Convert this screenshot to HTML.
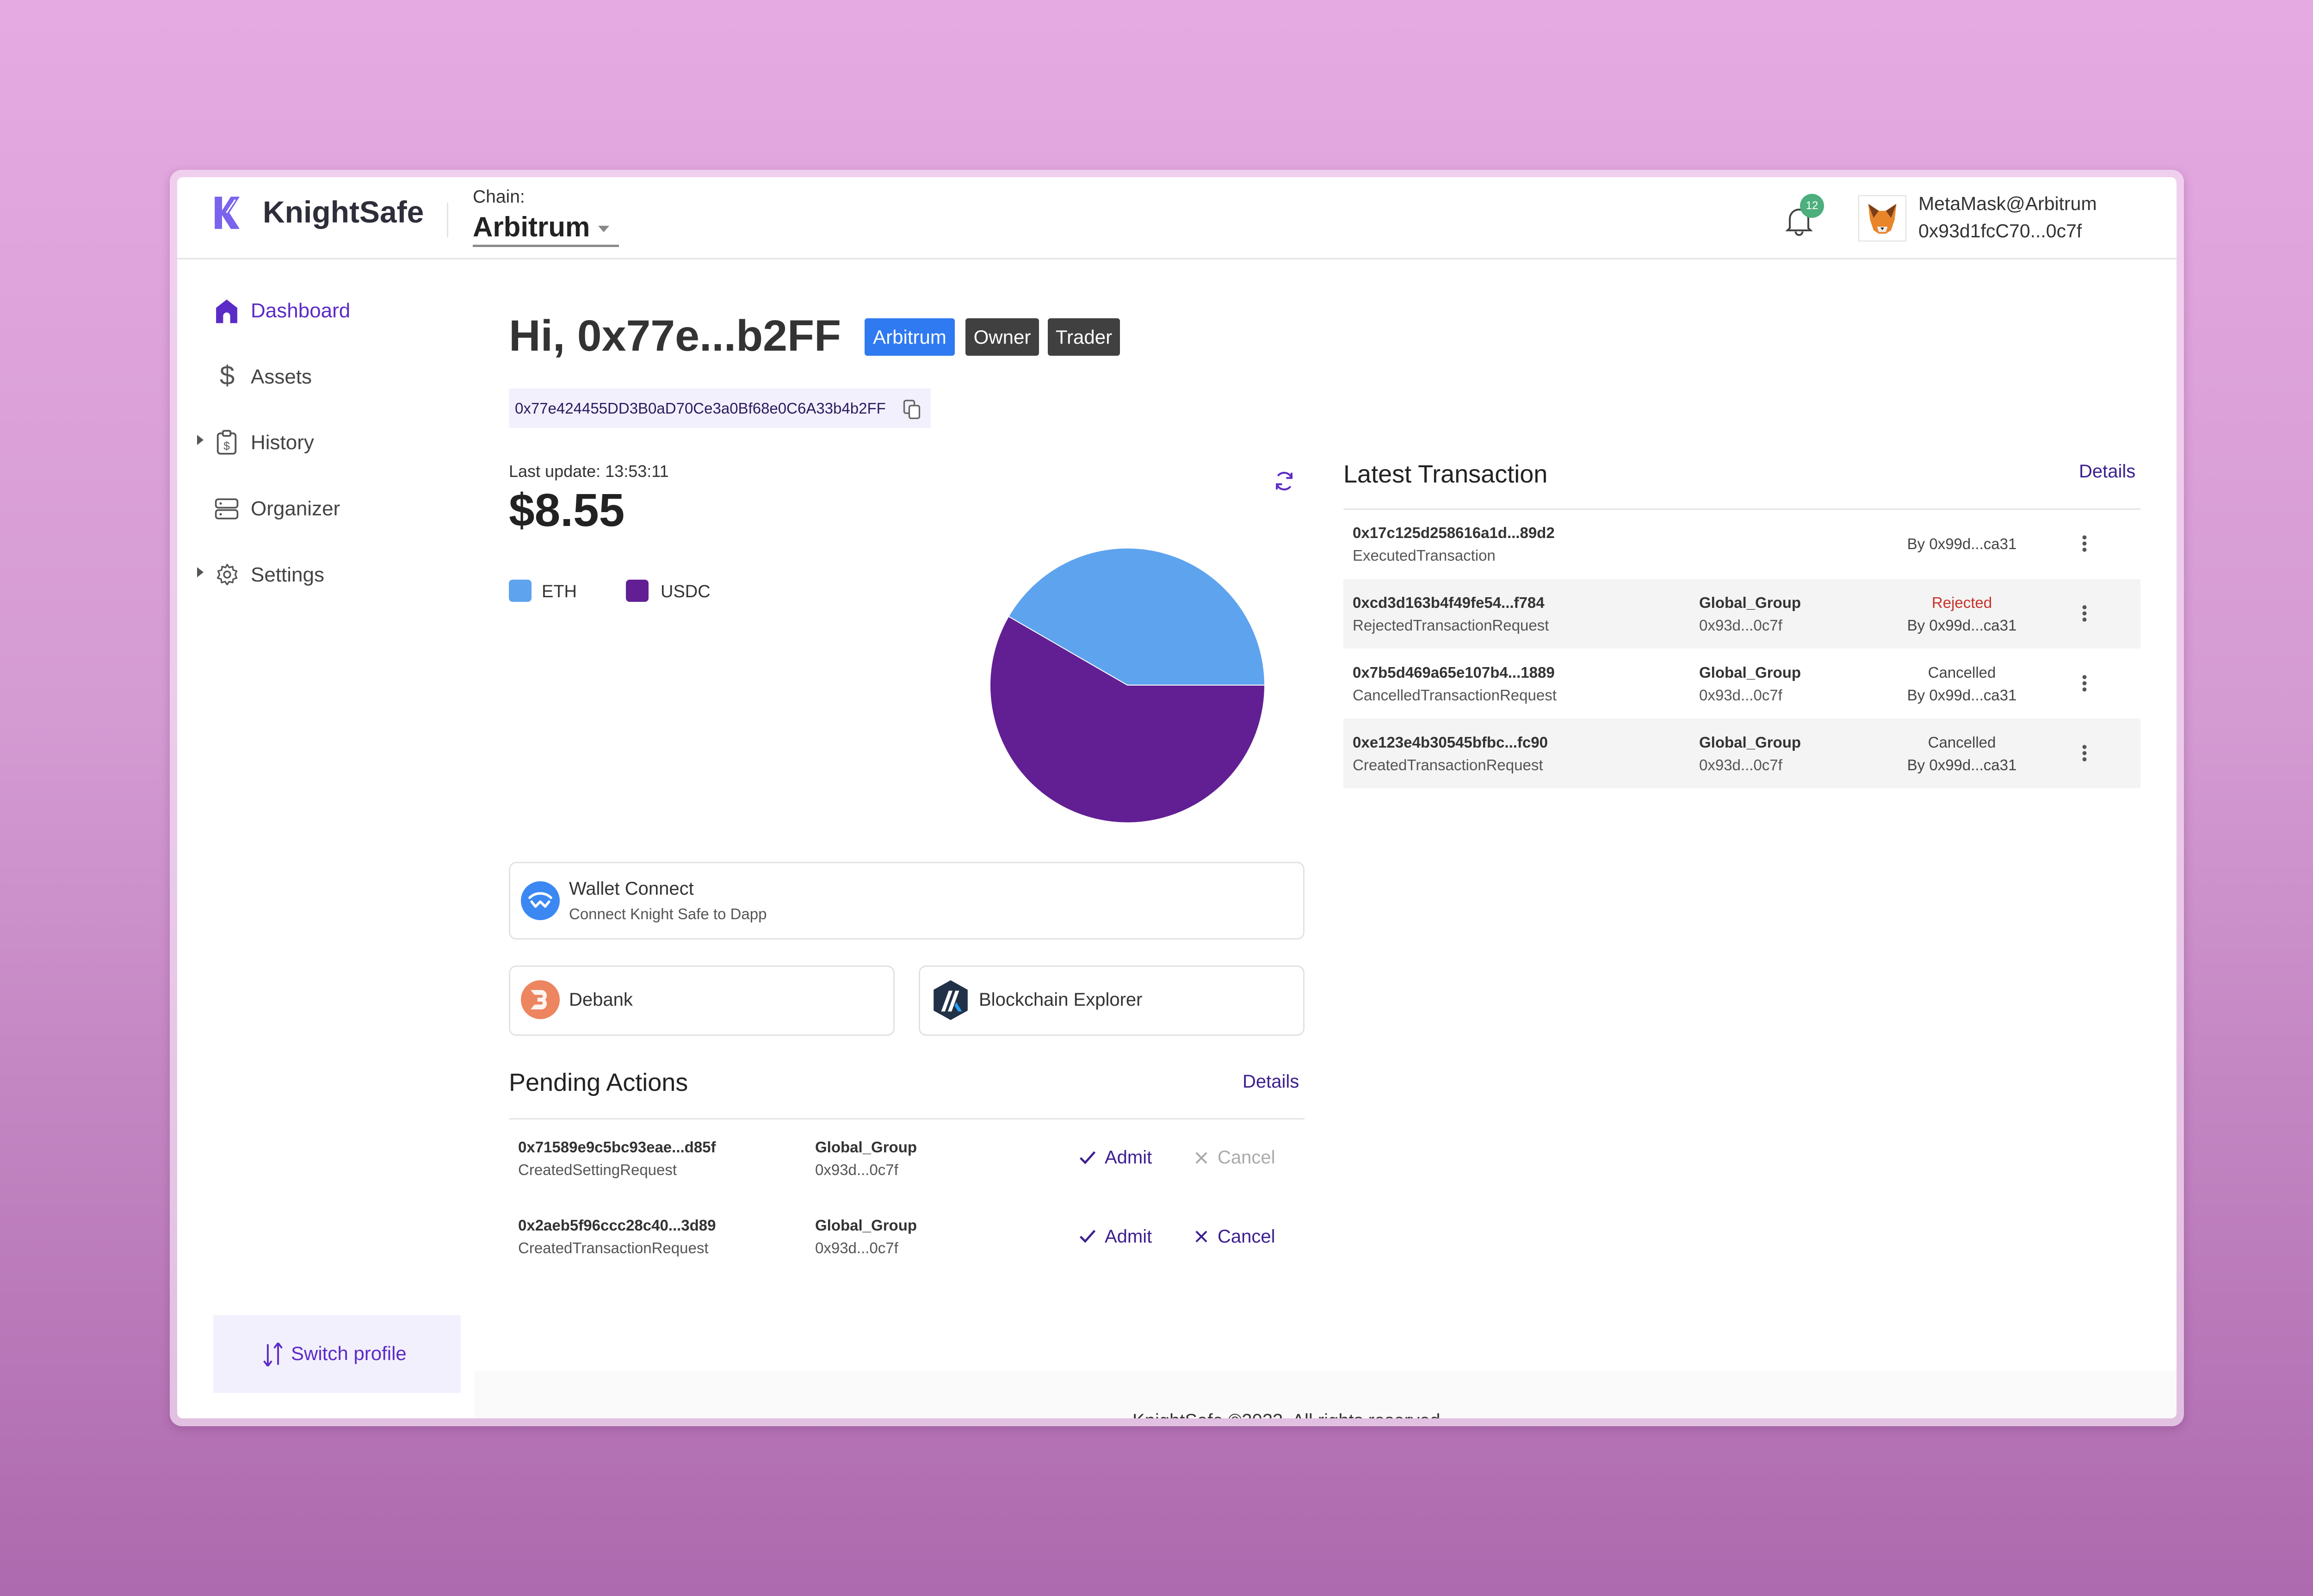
<!DOCTYPE html>
<html><head><meta charset="utf-8">
<style>
*{margin:0;padding:0;box-sizing:border-box}
html,body{width:5088px;height:3450px;overflow:hidden}
body{font-family:"Liberation Sans",sans-serif;background:linear-gradient(180deg,#e6aae2 0%,#d49ad2 45%,#ad6aae 100%);position:relative;color:#333}
.a{position:absolute;white-space:nowrap;line-height:1}
.frame{position:absolute;left:367px;top:367px;width:4354px;height:2716px;border-radius:26px;background:rgba(245,225,243,0.7);box-shadow:0 6px 20px rgba(90,30,90,0.25)}
.win{position:absolute;left:383px;top:383px;width:4322px;height:2683px;background:#fff;border-radius:12px;overflow:hidden}
.card{position:absolute;border:3px solid #e2e2e2;border-radius:16px;background:#fff}
.badge{position:absolute;top:688px;height:81px;border-radius:6px;color:#fff;font-size:42px;line-height:81px;text-align:center}
.h{font-weight:bold;color:#333;font-size:33px}
.s{color:#555;font-size:33px}
.nav{font-size:44px;color:#444}
</style></head><body>
<div class="frame"></div>
<div class="win">
  <div class="a" style="left:0;top:174px;width:4322px;height:4px;background:#e8e8e8"></div>
  <svg class="a" style="left:78px;top:39px" width="76" height="76" viewBox="0 0 24 24"><path d="M1 1h5v22H1z" fill="#7b63ee"/><path d="M12 1h6l-7 11 7 11h-6L5 12z" fill="#7b63ee"/><path d="M9 12l6-9" stroke="#fff" stroke-width="1" fill="none"/></svg>
  <div class="a" style="left:185px;top:42px;font-size:66px;font-weight:bold;color:#2e2e3a">KnightSafe</div>
  <div class="a" style="left:583px;top:55px;width:3px;height:75px;background:#e4e4e4"></div>
  <div class="a" style="left:639px;top:23px;font-size:39px;color:#333">Chain:</div>
  <div class="a" style="left:639px;top:78px;font-size:60px;font-weight:bold;color:#222">Arbitrum</div>
  <div class="a" style="left:910px;top:105px;width:0;height:0;border-left:12px solid transparent;border-right:12px solid transparent;border-top:14px solid #888"></div>
  <div class="a" style="left:639px;top:146px;width:316px;height:5px;background:#8a8a8a"></div>
  <svg class="a" style="left:3475px;top:60px" width="62" height="70" viewBox="0 0 24 28"><path d="M4 20V12a8 8 0 0 1 16 0v8l2 2H2z M9 23a3 3 0 0 0 6 0" fill="none" stroke="#444" stroke-width="1.6"/></svg>
  <div class="a" style="left:3508px;top:36px;width:52px;height:52px;border-radius:50%;background:#4caf7d;color:#fff;font-size:24px;line-height:52px;text-align:center">12</div>
  <div class="a" style="left:3634px;top:39px;width:104px;height:100px;border:2px solid #e0e0e0;background:#fff"></div>
  <svg class="a" style="left:3648px;top:50px" width="76" height="76" viewBox="0 0 40 40"><path d="M4 4l12 8h8l12-8-2 18-4 12-6 4h-8l-6-4-4-12z" fill="#e8852a"/><path d="M4 4l12 8-6 8z M36 4l-12 8 6 8z" fill="#7a3f18"/><path d="M14 30h12l-2 6h-8z" fill="#eee"/><path d="M18 31h4l-2 3z" fill="#222"/></svg>
  <div class="a" style="left:3764px;top:37px;font-size:41px;color:#333">MetaMask@Arbitrum</div>
  <div class="a" style="left:3764px;top:96px;font-size:41px;color:#333">0x93d1fcC70...0c7f</div>

  <svg class="a" style="left:81px;top:262px" width="52" height="56" viewBox="0 0 20 22"><path d="M10 1L1 8v13h6v-6a3 3 0 0 1 6 0v6h6V8z" fill="#5b2bc7"/></svg>
  <div class="a nav" style="left:159px;top:267px;color:#5b2bc7">Dashboard</div>
  <div class="a" style="left:92px;top:400px;font-size:58px;color:#555">$</div>
  <div class="a nav" style="left:159px;top:410px">Assets</div>
  <div class="a" style="left:43px;top:557px;border-top:11px solid transparent;border-bottom:11px solid transparent;border-left:14px solid #555"></div>
  <svg class="a" style="left:85px;top:545px" width="44" height="56" viewBox="0 0 16 20"><rect x="1" y="3" width="14" height="16" rx="2" fill="none" stroke="#555" stroke-width="1.4"/><rect x="5" y="1" width="6" height="4" rx="1" fill="#fff" stroke="#555" stroke-width="1.4"/><text x="8" y="16" font-size="9" text-anchor="middle" fill="#555" font-family="Liberation Sans">$</text></svg>
  <div class="a nav" style="left:159px;top:552px">History</div>
  <svg class="a" style="left:81px;top:693px" width="52" height="48" viewBox="0 0 20 18"><rect x="1" y="1" width="18" height="7" rx="2" fill="none" stroke="#555" stroke-width="1.4"/><rect x="1" y="10" width="18" height="7" rx="2" fill="none" stroke="#555" stroke-width="1.4"/><circle cx="5" cy="4.5" r="1" fill="#555"/><circle cx="5" cy="13.5" r="1" fill="#555"/></svg>
  <div class="a nav" style="left:159px;top:695px">Organizer</div>
  <div class="a" style="left:43px;top:843px;border-top:11px solid transparent;border-bottom:11px solid transparent;border-left:14px solid #555"></div>
  <svg class="a" style="left:82px;top:833px" width="52" height="52" viewBox="0 0 24 24"><circle cx="12" cy="12" r="3.2" fill="none" stroke="#555" stroke-width="1.6"/><path d="M12 2l2 3 3.5-1 .5 3.5 3.5 1-1.5 3.5 1.5 3.5-3.5 1-.5 3.5-3.5-1-2 3-2-3-3.5 1-.5-3.5-3.5-1L4.5 12 3 8.5l3.5-1L7 4l3.5 1z" fill="none" stroke="#555" stroke-width="1.5" stroke-linejoin="round"/></svg>
  <div class="a nav" style="left:159px;top:838px">Settings</div>
  <div class="a" style="left:78px;top:2460px;width:535px;height:168px;background:#f3f0fd"></div>
  <svg class="a" style="left:182px;top:2517px" width="50" height="56" viewBox="0 0 18 20"><path d="M5 19V2M5 19l-3-4M5 19l3-4M13 1v17M13 1l-3 4M13 1l3 4" fill="none" stroke="#5b2bc7" stroke-width="1.4"/></svg>
  <div class="a" style="left:246px;top:2522px;font-size:42px;color:#5b2bc7">Switch profile</div>
  <div class="a" style="left:642px;top:2580px;width:3680px;height:110px;background:#fafafa"></div>
  <div class="a" style="left:2065px;top:2668px;font-size:40px;color:#333">KnightSafe ©2023. All rights reserved</div>

  <div class="a" style="left:717px;top:296px;font-size:95px;font-weight:bold;color:#333">Hi, 0x77e...b2FF</div>
  <div class="badge" style="left:1486px;width:195px;background:#2f7af0;top:305px">Arbitrum</div>
  <div class="badge" style="left:1704px;width:159px;background:#404040;top:305px">Owner</div>
  <div class="badge" style="left:1882px;width:156px;background:#404040;top:305px">Trader</div>
  <div class="a" style="left:717px;top:457px;width:912px;height:85px;background:#f3f0fd"></div>
  <div class="a" style="left:730px;top:483px;font-size:33px;color:#2a1a5e">0x77e424455DD3B0aD70Ce3a0Bf68e0C6A33b4b2FF</div>
  <svg class="a" style="left:1568px;top:480px" width="40" height="44" viewBox="0 0 14 16"><rect x="1" y="1" width="8" height="10" rx="1.5" fill="none" stroke="#666" stroke-width="1.2"/><rect x="5" y="5" width="8" height="10" rx="1.5" fill="#fff" stroke="#666" stroke-width="1.2"/></svg>

  <div class="a" style="left:717px;top:618px;font-size:36px;color:#333">Last update: 13:53:11</div>
  <div class="a" style="left:717px;top:670px;font-size:100px;font-weight:bold;color:#222">$8.55</div>
  <svg class="a" style="left:2370px;top:632px" width="46" height="50" viewBox="0 0 20 22"><path d="M17 8A7.5 7.5 0 0 0 4 6M3 14a7.5 7.5 0 0 0 13 2" fill="none" stroke="#5b2bc7" stroke-width="1.8"/><path d="M17 3v5h-5M3 19v-5h5" fill="none" stroke="#5b2bc7" stroke-width="1.8"/></svg>
  <div class="a" style="left:717px;top:870px;width:49px;height:48px;border-radius:8px;background:#5ea3ee"></div>
  <div class="a" style="left:788px;top:877px;font-size:38px;color:#333">ETH</div>
  <div class="a" style="left:970px;top:870px;width:49px;height:48px;border-radius:8px;background:#621f93"></div>
  <div class="a" style="left:1045px;top:877px;font-size:38px;color:#333">USDC</div>
  <svg class="a" style="left:1754px;top:798px" width="600" height="600" viewBox="0 0 600 600">
    <path d="M300 300L596 300A296 296 0 0 0 44 152Z" fill="#5ea3ee"/>
    <path d="M300 300L44 152A296 296 0 1 0 596 300Z" fill="#621f93"/>
    <path d="M300 300L44 152M300 300L596 300" stroke="#fff" stroke-width="2"/>
  </svg>

  <div class="card" style="left:717px;top:1480px;width:1720px;height:168px"></div>
  <svg class="a" style="left:743px;top:1522px" width="84" height="84" viewBox="0 0 40 40"><circle cx="20" cy="20" r="20" fill="#3b88f3"/><path d="M9 17c6-6 16-6 22 0M11 21l4 5 5-5 5 5 4-5" fill="none" stroke="#fff" stroke-width="2.6" stroke-linecap="round" stroke-linejoin="round"/></svg>
  <div class="a" style="left:847px;top:1518px;font-size:40px;color:#333">Wallet Connect</div>
  <div class="a" style="left:847px;top:1576px;font-size:33px;color:#555">Connect Knight Safe to Dapp</div>
  <div class="card" style="left:717px;top:1704px;width:834px;height:152px"></div>
  <svg class="a" style="left:743px;top:1736px" width="84" height="84" viewBox="0 0 40 40"><circle cx="20" cy="20" r="20" fill="#ec8560"/><path d="M10 10h12a6 6 0 0 1 3 10 6 6 0 0 1-3 10H10l4-5h7a1.5 1.5 0 0 0 0-3h-4v-4h4a1.5 1.5 0 0 0 0-3h-7z" fill="#fff" opacity=".9"/></svg>
  <div class="a" style="left:847px;top:1758px;font-size:40px;color:#333">Debank</div>
  <div class="card" style="left:1603px;top:1704px;width:834px;height:152px"></div>
  <svg class="a" style="left:1630px;top:1734px" width="84" height="90" viewBox="0 0 40 44"><path d="M20 1l18 10v22L20 43 2 33V11z" fill="#213147"/><path d="M10 34L18 12h4L14 34zM17 34l8-22h4l-8 22z" fill="#fff"/><path d="M26 24l6 10h-4l-4-6z" fill="#28a0f0"/></svg>
  <div class="a" style="left:1733px;top:1758px;font-size:40px;color:#333">Blockchain Explorer</div>

  <div class="a" style="left:717px;top:1930px;font-size:54px;color:#222">Pending Actions</div>
  <div class="a" style="left:2303px;top:1935px;font-size:40px;color:#3b1f8f">Details</div>
  <div class="a" style="left:717px;top:2034px;width:1720px;height:3px;background:#e4e4e4"></div>
  <div class="a h" style="left:737px;top:2080px">0x71589e9c5bc93eae...d85f</div>
  <div class="a s" style="left:737px;top:2129px">CreatedSettingRequest</div>
  <div class="a h" style="left:1379px;top:2080px">Global_Group</div>
  <div class="a s" style="left:1379px;top:2129px">0x93d...0c7f</div>
  <svg class="a" style="left:1950px;top:2103px" width="36" height="34" viewBox="0 0 14 12"><path d="M1 6l4 4 8-9" fill="none" stroke="#3b1f8f" stroke-width="1.8"/></svg>
  <div class="a" style="left:2005px;top:2099px;font-size:40px;color:#3b1f8f">Admit</div>
  <svg class="a" style="left:2200px;top:2106px" width="28" height="28" viewBox="0 0 10 10"><path d="M1 1l8 8M9 1l-8 8" stroke="#aaa" stroke-width="1.4"/></svg>
  <div class="a" style="left:2249px;top:2099px;font-size:40px;color:#aaa">Cancel</div>
  <div class="a h" style="left:737px;top:2249px">0x2aeb5f96ccc28c40...3d89</div>
  <div class="a s" style="left:737px;top:2298px">CreatedTransactionRequest</div>
  <div class="a h" style="left:1379px;top:2249px">Global_Group</div>
  <div class="a s" style="left:1379px;top:2298px">0x93d...0c7f</div>
  <svg class="a" style="left:1950px;top:2273px" width="36" height="34" viewBox="0 0 14 12"><path d="M1 6l4 4 8-9" fill="none" stroke="#3b1f8f" stroke-width="1.8"/></svg>
  <div class="a" style="left:2005px;top:2270px;font-size:40px;color:#3b1f8f">Admit</div>
  <svg class="a" style="left:2200px;top:2276px" width="28" height="28" viewBox="0 0 10 10"><path d="M1 1l8 8M9 1l-8 8" stroke="#3b1f8f" stroke-width="1.4"/></svg>
  <div class="a" style="left:2249px;top:2270px;font-size:40px;color:#3b1f8f">Cancel</div>

  <div class="a" style="left:2521px;top:615px;font-size:54px;color:#222">Latest Transaction</div>
  <div class="a" style="left:4111px;top:616px;font-size:40px;color:#3b1f8f">Details</div>
  <div class="a" style="left:2521px;top:716px;width:1723px;height:3px;background:#e4e4e4"></div>
  <div class="a" style="left:2521px;top:869px;width:1723px;height:150px;background:#f4f4f4"></div>
  <div class="a" style="left:2521px;top:1170px;width:1723px;height:151px;background:#f4f4f4"></div>

  <div class="a h" style="left:2541px;top:752px">0x17c125d258616a1d...89d2</div>
  <div class="a s" style="left:2541px;top:801px">ExecutedTransaction</div>
  <div class="a s" style="left:3738px;top:776px;width:240px;text-align:center;color:#444">By 0x99d...ca31</div>

  <div class="a h" style="left:2541px;top:903px">0xcd3d163b4f49fe54...f784</div>
  <div class="a s" style="left:2541px;top:952px">RejectedTransactionRequest</div>
  <div class="a h" style="left:3290px;top:903px">Global_Group</div>
  <div class="a s" style="left:3290px;top:952px">0x93d...0c7f</div>
  <div class="a s" style="left:3738px;top:903px;width:240px;text-align:center;color:#c8302a">Rejected</div>
  <div class="a s" style="left:3738px;top:952px;width:240px;text-align:center;color:#444">By 0x99d...ca31</div>

  <div class="a h" style="left:2541px;top:1054px">0x7b5d469a65e107b4...1889</div>
  <div class="a s" style="left:2541px;top:1103px">CancelledTransactionRequest</div>
  <div class="a h" style="left:3290px;top:1054px">Global_Group</div>
  <div class="a s" style="left:3290px;top:1103px">0x93d...0c7f</div>
  <div class="a s" style="left:3738px;top:1054px;width:240px;text-align:center;color:#444">Cancelled</div>
  <div class="a s" style="left:3738px;top:1103px;width:240px;text-align:center;color:#444">By 0x99d...ca31</div>

  <div class="a h" style="left:2541px;top:1205px">0xe123e4b30545bfbc...fc90</div>
  <div class="a s" style="left:2541px;top:1254px">CreatedTransactionRequest</div>
  <div class="a h" style="left:3290px;top:1205px">Global_Group</div>
  <div class="a s" style="left:3290px;top:1254px">0x93d...0c7f</div>
  <div class="a s" style="left:3738px;top:1205px;width:240px;text-align:center;color:#444">Cancelled</div>
  <div class="a s" style="left:3738px;top:1254px;width:240px;text-align:center;color:#444">By 0x99d...ca31</div>

  <svg class="a" style="left:4116px;top:772px" width="14" height="40" viewBox="0 0 6 18"><circle cx="3" cy="3" r="2" fill="#555"/><circle cx="3" cy="9" r="2" fill="#555"/><circle cx="3" cy="15" r="2" fill="#555"/></svg>
  <svg class="a" style="left:4116px;top:923px" width="14" height="40" viewBox="0 0 6 18"><circle cx="3" cy="3" r="2" fill="#555"/><circle cx="3" cy="9" r="2" fill="#555"/><circle cx="3" cy="15" r="2" fill="#555"/></svg>
  <svg class="a" style="left:4116px;top:1074px" width="14" height="40" viewBox="0 0 6 18"><circle cx="3" cy="3" r="2" fill="#555"/><circle cx="3" cy="9" r="2" fill="#555"/><circle cx="3" cy="15" r="2" fill="#555"/></svg>
  <svg class="a" style="left:4116px;top:1225px" width="14" height="40" viewBox="0 0 6 18"><circle cx="3" cy="3" r="2" fill="#555"/><circle cx="3" cy="9" r="2" fill="#555"/><circle cx="3" cy="15" r="2" fill="#555"/></svg>
</div>
</body></html>
